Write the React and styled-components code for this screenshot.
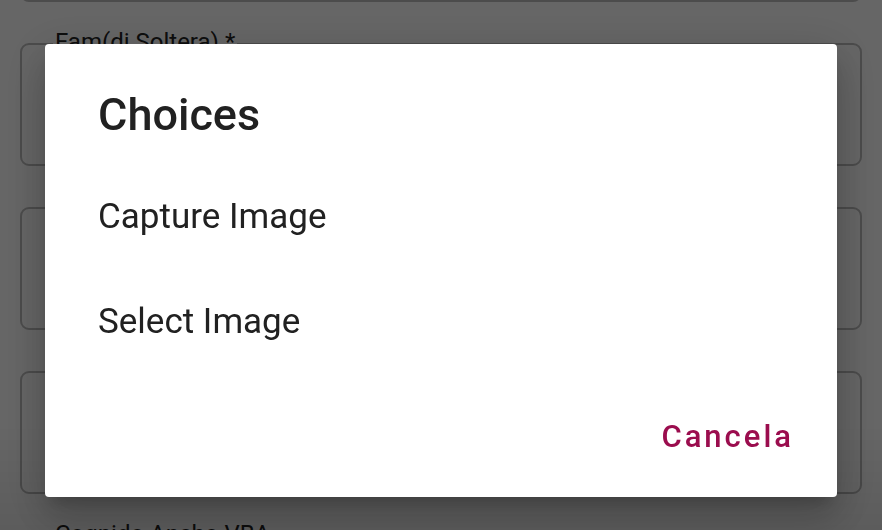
import React from 'react';
import styled, { createGlobalStyle } from 'styled-components';

const GlobalStyle = createGlobalStyle`
    html, body {
        margin: 0;
        padding: 0;
        background: #ffffff;
        font-family: Roboto, "Noto Sans", sans-serif;
    }
    body {
        width: 882px;
        height: 530px;
        overflow: hidden;
    }
`;

const Page = styled.div`
    display: flex;
    flex-direction: column;
    gap: 41px;
    padding: 0 20px;
    margin-top: -121px;
`;

const FieldGroup = styled.div`
    position: relative;
`;

const FieldLabel = styled.span`
    position: absolute;
    left: 33px;
    top: -15px;
    font-size: 24px;
    line-height: 28px;
    color: #222;
    background: #fff;
    padding: 0 2px;
`;

const Field = styled.div`
    height: 119px;
    border: 2px solid #bdbdbd;
    border-radius: 9px;
    background: #fff;
`;

const Backdrop = styled.div`
    position: fixed;
    inset: 0;
    background: linear-gradient(180deg, rgba(0, 0, 0, 0.6) 0%, rgba(0, 0, 0, 0.6) 80%, rgba(0, 0, 0, 0.64) 100%);
    display: flex;
    justify-content: center;
    align-items: flex-start;
    padding-top: 44px;
`;

const Dialog = styled.div`
    width: 792px;
    height: 453px;
    background: #fff;
    border-radius: 4px;
    box-shadow: 0 11px 15px -7px rgba(0, 0, 0, 0.2), 0 24px 38px 3px rgba(0, 0, 0, 0.14), 0 9px 46px 8px rgba(0, 0, 0, 0.12);
    display: flex;
    flex-direction: column;
    box-sizing: border-box;
`;

const Title = styled.h2`
    margin: 0;
    padding: 43px 53px 0;
    font-size: 45px;
    font-weight: 500;
    line-height: 56px;
    color: #212121;
`;

const OptionList = styled.div`
    display: flex;
    flex-direction: column;
    padding-top: 21px;
`;

const Option = styled.div`
    height: 105px;
    padding: 0 53px;
    display: flex;
    align-items: center;
    font-size: 35px;
    color: #212121;
    box-sizing: border-box;
`;

const Actions = styled.div`
    margin-top: auto;
    display: flex;
    justify-content: flex-end;
    padding: 0 43px 32px;
`;

const TextButton = styled.button`
    border: none;
    background: none;
    padding: 10px 0;
    font-family: Roboto, sans-serif;
    font-size: 31px;
    font-weight: 500;
    letter-spacing: 3px;
    color: #9b0d4e;
`;

const fields = [
    { label: null },
    { label: 'Fam(di Soltera) *' },
    { label: 'Nome *' },
    { label: 'Cognome *' },
    { label: 'Cognido Ancho VBA' },
];

export default function App() {
    return (
        <>
            <GlobalStyle />
            <Page>
                {fields.map((f, i) => (
                    <FieldGroup key={i}>
                        {f.label && <FieldLabel>{f.label}</FieldLabel>}
                        <Field />
                    </FieldGroup>
                ))}
            </Page>
            <Backdrop>
                <Dialog>
                    <Title>Choices</Title>
                    <OptionList>
                        <Option>Capture Image</Option>
                        <Option>Select Image</Option>
                    </OptionList>
                    <Actions>
                        <TextButton>Cancela</TextButton>
                    </Actions>
                </Dialog>
            </Backdrop>
        </>
    );
}
